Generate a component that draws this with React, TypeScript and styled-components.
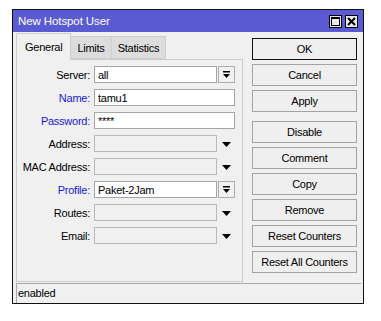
import { createGlobalStyle, styled } from 'styled-components';

const GlobalStyle = createGlobalStyle`
    body {
        margin: 0;
        background: #fff;
        font-family: "Liberation Sans", Arial, sans-serif;
        font-size: 11px;
        letter-spacing: -0.25px;
        color: #000;
    }
`;

const Window = styled.div`
    margin: 9px 0 0 12px;
    width: 352px;
    height: 295px;
    box-sizing: border-box;
    border: 1px solid #111;
    background: #f0f0f0;
    display: flex;
    flex-direction: column;
`;

const TitleBar = styled.div`
    height: 22px;
    background: #5a5ad2;
    color: #fff;
    display: flex;
    align-items: center;
    justify-content: space-between;
    padding: 0 5px 0 5px;
    font-size: 11.5px;
    letter-spacing: -0.1px;
`;

const TitleButtons = styled.div`
    display: flex;
    gap: 3px;
`;

const TitleBtn = styled.div`
    width: 11px;
    height: 11px;
    border: 1px solid #000;
    background: #e9e9e9;
    display: flex;
    align-items: center;
    justify-content: center;
`;

const Body = styled.div`
    flex: 1;
    display: flex;
    gap: 9px;
    padding: 1px 5px 0 3px;
`;

const LeftCol = styled.div`
    width: 227px;
    display: flex;
    flex-direction: column;
`;

const TabStrip = styled.div`
    display: flex;
    align-items: flex-end;
    height: 26px;
    position: relative;
    z-index: 1;
`;

const Tab = styled.div<{ $active?: boolean }>`
    box-sizing: border-box;
    height: ${(p) => (p.$active ? '27px' : '23px')};
    margin-bottom: ${(p) => (p.$active ? '-1px' : '0')};
    padding: 0 ${(p) => (p.$active ? '8px' : '6px')};
    border: 1px solid #cfcfcf;
    border-bottom: ${(p) => (p.$active ? 'none' : '1px solid #cfcfcf')};
    background: ${(p) => (p.$active ? '#f0f0f0' : '#dcdcdc')};
    display: flex;
    align-items: center;
    padding-top: ${(p) => (p.$active ? '0' : '1px')};
    & + & {
        border-left: none;
    }
`;

const Panel = styled.div`
    height: 223px;
    box-sizing: border-box;
    border: 1px solid #cbcbcb;
    padding-top: 6px;
    display: flex;
    flex-direction: column;
    gap: 6px;
`;

const Row = styled.div`
    display: flex;
    align-items: center;
    height: 17px;
`;

const Label = styled.div<{ $blue?: boolean }>`
    width: 73px;
    text-align: right;
    margin-right: 4px;
    color: ${(p) => (p.$blue ? '#1a1ad4' : '#000')};
    white-space: nowrap;
`;

const Field = styled.div<{ $disabled?: boolean; $wide?: boolean }>`
    box-sizing: border-box;
    width: ${(p) => (p.$wide ? '141px' : '123px')};
    height: 17px;
    border: 1px solid ${(p) => (p.$disabled ? '#b9b9b9' : '#a5a5a5')};
    background: ${(p) => (p.$disabled ? '#f0f0f0' : '#fff')};
    padding-left: 3px;
    display: flex;
    align-items: center;
    white-space: nowrap;
`;

const DropBtn = styled.div`
    box-sizing: border-box;
    width: 17px;
    height: 17px;
    margin-left: 1px;
    border: 1px solid #adadad;
    background: #f2f2f2;
    display: flex;
    align-items: center;
    justify-content: center;
`;

const DropArrow = styled.div`
    width: 18px;
    display: flex;
    justify-content: center;
    padding-top: 1px;
`;

const ButtonCol = styled.div`
    width: 105px;
    margin-top: 5px;
    display: flex;
    flex-direction: column;
    gap: 4px;
`;

const Button = styled.div<{ $default?: boolean; $spaced?: boolean }>`
    box-sizing: border-box;
    height: 22px;
    border: 1px solid ${(p) => (p.$default ? '#111' : '#a3a3a3')};
    background: #efefef;
    display: flex;
    align-items: center;
    justify-content: center;
    margin-top: ${(p) => (p.$spaced ? '5px' : '0')};
    white-space: nowrap;
`;

const StatusBar = styled.div`
    height: 20px;
    box-sizing: border-box;
    margin: 0 2px 0 3px;
    border-top: 1px solid #a8a8a8;
    border-left: 1px solid #a8a8a8;
    padding: 0 0 2px 1px;
    display: flex;
    align-items: center;
`;

const PinArrow = () => (
    <svg width="7" height="8" viewBox="0 0 7 8">
        <rect x="0" y="0" width="7" height="1.5" fill="#000" />
        <polygon points="0,3 7,3 3.5,7" fill="#000" />
    </svg>
);

const Triangle = () => (
    <svg width="9" height="5" viewBox="0 0 9 5">
        <polygon points="0,0 9,0 4.5,5" fill="#000" />
    </svg>
);

type FieldRow = {
    label: string;
    value?: string;
    blue?: boolean;
    kind: 'combo' | 'text' | 'disabled';
};

const rows: FieldRow[] = [
    { label: 'Server:', value: 'all', kind: 'combo' },
    { label: 'Name:', value: 'tamu1', blue: true, kind: 'text' },
    { label: 'Password:', value: '****', blue: true, kind: 'text' },
    { label: 'Address:', kind: 'disabled' },
    { label: 'MAC Address:', kind: 'disabled' },
    { label: 'Profile:', value: 'Paket-2Jam', blue: true, kind: 'combo' },
    { label: 'Routes:', kind: 'disabled' },
    { label: 'Email:', kind: 'disabled' },
];

const buttons = [
    'OK',
    'Cancel',
    'Apply',
    'Disable',
    'Comment',
    'Copy',
    'Remove',
    'Reset Counters',
    'Reset All Counters',
];

const App = () => {
    return (
        <>
            <GlobalStyle />
            <Window>
                <TitleBar>
                    <span>New Hotspot User</span>
                    <TitleButtons>
                        <TitleBtn>
                            <svg width="9" height="9" viewBox="0 0 9 9">
                                <rect x="0.5" y="0.5" width="8" height="8" fill="none" stroke="#000" />
                                <rect x="0" y="0" width="9" height="2" fill="#000" />
                            </svg>
                        </TitleBtn>
                        <TitleBtn>
                            <svg width="9" height="9" viewBox="0 0 9 9">
                                <path d="M1 1 L8 8 M8 1 L1 8" stroke="#000" strokeWidth="2" />
                            </svg>
                        </TitleBtn>
                    </TitleButtons>
                </TitleBar>
                <Body>
                    <LeftCol>
                        <TabStrip>
                            <Tab $active>General</Tab>
                            <Tab>Limits</Tab>
                            <Tab>Statistics</Tab>
                        </TabStrip>
                        <Panel>
                            {rows.map((r) => (
                                <Row key={r.label}>
                                    <Label $blue={r.blue}>{r.label}</Label>
                                    <Field $wide={r.kind === 'text'} $disabled={r.kind === 'disabled'}>
                                        {r.value}
                                    </Field>
                                    {r.kind === 'combo' && (
                                        <DropBtn>
                                            <PinArrow />
                                        </DropBtn>
                                    )}
                                    {r.kind === 'disabled' && (
                                        <DropArrow>
                                            <Triangle />
                                        </DropArrow>
                                    )}
                                </Row>
                            ))}
                        </Panel>
                    </LeftCol>
                    <ButtonCol>
                        {buttons.map((b) => (
                            <Button key={b} $default={b === 'OK'} $spaced={b === 'Disable'}>
                                {b}
                            </Button>
                        ))}
                    </ButtonCol>
                </Body>
                <StatusBar>enabled</StatusBar>
            </Window>
        </>
    );
};

export default App;
